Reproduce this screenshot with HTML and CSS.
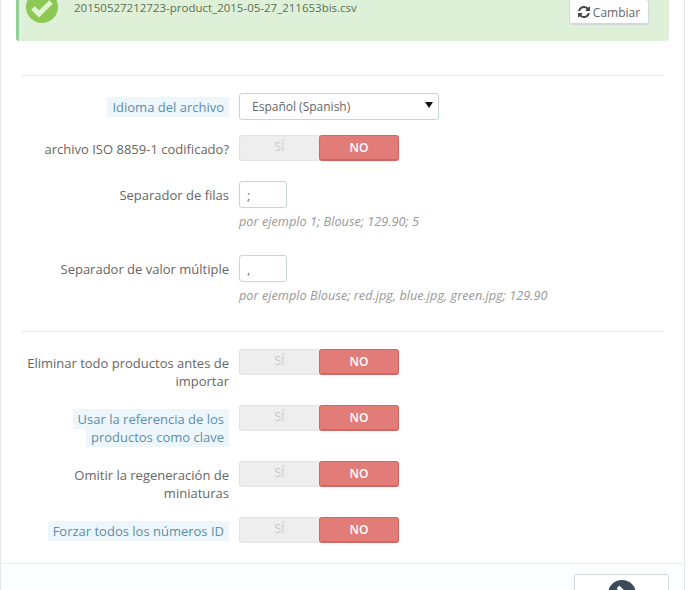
FILE: index.html
```html
<!DOCTYPE html>
<html lang="es">
<head>
<meta charset="utf-8">
<title>Importar</title>
<link rel="stylesheet" href="styles.css">
</head>
<body>
<div class="panel">
  <div class="alert">
    <svg class="alert-icon" viewBox="0 0 32 32"><circle cx="16" cy="16" r="16" fill="#8bc954"/><path d="M7 17l6 6 12-12" fill="none" stroke="#e4f3d6" stroke-width="5"/></svg>
    <span class="file">20150527212723-product_2015-05-27_211653bis.csv</span>
    <button class="btn change" type="button"><svg class="refresh" viewBox="0 0 1536 1536"><path fill="#444" d="M1511 928q0 5-1 7-64 268-268 434.5t-478 166.5q-146 0-282.5-55t-243.5-157l-129 129q-19 19-45 19t-45-19-19-45v-448q0-26 19-45t45-19h448q26 0 45 19t19 45-19 45l-137 137q71 66 161 102t187 36q134 0 250-65t186-179q11-17 53-117 8-23 30-23h192q13 0 22.5 9.5t9.5 22.5zm25-800v448q0 26-19 45t-45 19h-448q-26 0-45-19t-19-45 19-45l138-138q-148-137-349-137-134 0-250 65t-186 179q-11 17-53 117-8 23-30 23h-199q-13 0-22.5-9.5t-9.5-22.5v-7q65-268 270-434.5t480-166.5q146 0 284 55.5t245 156.5l130-129q19-19 45-19t45 19 19 45z"/></svg>Cambiar</button>
  </div>
  <hr class="rule first">
  <div class="row">
    <label class="label"><span class="hint">Idioma del archivo</span></label>
    <div class="select-wrap"><select class="select"><option>Español (Spanish)</option></select></div>
  </div>
  <div class="row wide">
    <label class="label">archivo ISO 8859-1 codificado?</label>
    <div class="switch"><span class="yes">SÍ</span><span class="no">NO</span></div>
  </div>
  <div class="row sep">
    <label class="label">Separador de filas</label>
    <div class="field">
      <input class="input" type="text" value=";">
      <p class="help">por ejemplo 1; Blouse; 129.90; 5</p>
    </div>
  </div>
  <div class="row sep">
    <label class="label">Separador de valor múltiple</label>
    <div class="field">
      <input class="input" type="text" value=",">
      <p class="help">por ejemplo Blouse; red.jpg, blue.jpg, green.jpg; 129.90</p>
    </div>
  </div>
  <hr class="rule second">
  <div class="row tall">
    <label class="label">Eliminar todo productos antes de importar</label>
    <div class="switch"><span class="yes">SÍ</span><span class="no">NO</span></div>
  </div>
  <div class="row tall">
    <label class="label"><span class="hint">Usar la referencia de los productos como clave</span></label>
    <div class="switch"><span class="yes">SÍ</span><span class="no">NO</span></div>
  </div>
  <div class="row tall">
    <label class="label">Omitir la regeneración de miniaturas</label>
    <div class="switch"><span class="yes">SÍ</span><span class="no">NO</span></div>
  </div>
  <div class="row wide">
    <label class="label"><span class="hint">Forzar todos los números ID</span></label>
    <div class="switch"><span class="yes">SÍ</span><span class="no">NO</span></div>
  </div>
  <div class="footer">
    <button class="btn next" type="button"><svg class="next-icon" viewBox="0 0 28 28"><circle cx="14" cy="14" r="14" fill="#3b4a58"/><path d="M10 7l7 7-7 7" fill="none" stroke="#fff" stroke-width="4"/></svg></button>
  </div>
</div>
</body>
</html>
```
FILE: styles.css
```css
* { box-sizing: border-box; }
html, body { margin: 0; height: 590px; overflow: hidden; background: #fff; }
body { font-family: "Open Sans", sans-serif; font-size: 13px; color: #666; }
.panel { width: 685px; height: 610px; border: 1px solid #e6e6e6; border-top: 0; background: #fff; overflow: hidden; }
.alert { display: flex; align-items: flex-start; width: 653px; height: 61px; margin: -20px 0 0 15px; padding: 11px 20px 0 7px; background: #dff0d8; border-left: 3px solid #92d097; border-radius: 0 0 3px 3px; color: #5a7052; }
.alert-icon { width: 32px; height: 32px; flex: none; }
.file { flex: 1; margin: 8px 0 0 16px; font-size: 11.5px; line-height: 17px; }
.btn { display: flex; align-items: center; justify-content: center; background: #fff; border: 1px solid #d3d8db; border-radius: 3px; box-shadow: inset 0 -1px 0 #d6d6d6; font: inherit; color: #666; padding: 0; }
.change { width: 80px; height: 26px; margin-top: 8px; font-size: 12px; }
.refresh { width: 12px; height: 12px; margin-right: 3px; }
.rule { height: 1px; margin: 0 20px; border: 0; background: #eee; }
.first { margin-top: 34px; margin-bottom: 17px; }
.second { margin-top: 22px; margin-bottom: 17px; }
.row { display: flex; margin-bottom: 15px; }
.row.wide { margin-bottom: 20px; }
.row.sep { height: 54px; margin-bottom: 20px; }
.row.tall { height: 41px; }
.label { width: 228px; margin-right: 10px; padding: 5px 0 0 15px; text-align: right; line-height: 18px; flex: none; }
.hint { background: #edf7fb; color: #5d8eaa; padding: 1px 5px; -webkit-box-decoration-break: clone; box-decoration-break: clone; }
.select-wrap { position: relative; width: 200px; height: 27px; }
.select-wrap::after { content: ""; position: absolute; right: 6px; top: 9px; border: 4px solid transparent; border-top: 6px solid #111; border-bottom: 0; pointer-events: none; }
.select { width: 100%; height: 100%; appearance: none; -webkit-appearance: none; background: #fff; border: 1px solid #c7d6db; border-radius: 3px; padding: 0 12px; font: inherit; font-size: 12px; color: #666; outline: 0; }
.switch { display: flex; width: 160px; height: 26px; text-align: center; line-height: 24px; }
.yes { width: 80px; background: #eee; border: 1px solid #e2e2e2; border-right: 0; border-radius: 3px 0 0 3px; color: #ccc; font-size: 12px; line-height: 22px; }
.no { width: 80px; background: #e27c79; border: 1px solid #d9645f; border-bottom-width: 2px; border-radius: 3px; color: #fff; font-weight: 600; font-size: 12px; }
.field { display: flex; flex-direction: column; align-items: flex-start; }
.input { width: 48px; height: 27px; border: 1px solid #c7d6db; border-radius: 3px; padding: 0 7px; font: inherit; color: #777; outline: 0; }
.help { margin: 5px 0 0; font-size: 12.75px; font-style: italic; line-height: 17px; color: #999; }
.footer { display: flex; justify-content: flex-end; height: 60px; padding: 10px 15px 0 0; background: #fcfdfe; border-top: 1px solid #eee; }
.next { width: 95px; height: 60px; align-items: flex-start; padding-top: 5px; flex: none; }
.next-icon { width: 28px; height: 28px; }
```
